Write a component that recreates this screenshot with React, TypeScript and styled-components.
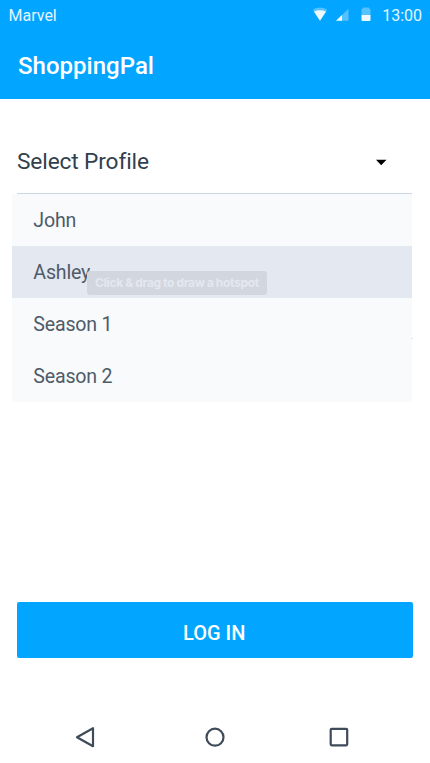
import React from "react";
import styled, { createGlobalStyle } from "styled-components";

const GlobalStyle = createGlobalStyle`
  * { box-sizing: border-box; }
  body { margin: 0; background: #fff; font-family: Roboto, sans-serif; color: #323f4d; }
`;

const Screen = styled.main`
  width: 430px;
  height: 763px;
  display: flex;
  flex-direction: column;
  background: #fff;
  overflow: hidden;
`;

const Header = styled.header`
  height: 98.5px;
  background: #02a5ff;
  color: #fff;
`;

const StatusBar = styled.div`
  height: 30px;
  padding: 0 8px 0 8.5px;
  display: flex;
  align-items: center;
  justify-content: space-between;
  font-size: 16px;
  line-height: 31px;
  color: #e4f5ff;
`;

const StatusIcons = styled.div`
  display: flex;
  align-items: center;
`;

const Glyphs = styled.svg`
  display: block;
  margin-right: 10px;
`;

const AppTitle = styled.h1`
  margin: 21px 0 0 18px;
  font-size: 24px;
  font-weight: 500;
  line-height: 30px;
  letter-spacing: 0.02px;
`;

const Select = styled.div`
  height: 95.5px;
  margin: 0 18px 0 17px;
  padding: 32px 25px 0 0;
  display: flex;
  align-items: center;
  justify-content: space-between;
  border-bottom: 1.5px solid #cbd5e3;
  font-size: 22.7px;
  letter-spacing: -0.13px;
`;

const Caret = styled.svg`
  display: block;
`;

const Menu = styled.ul`
  position: relative;
  width: 400px;
  height: 208px;
  margin: 0 0 0 12px;
  padding: 0;
  list-style: none;
`;

const Option = styled.li<{ $selected?: boolean }>`
  height: 52px;
  padding-left: 21.3px;
  font-size: 19.6px;
  line-height: 53px;
  letter-spacing: -0.2px;
  color: #4f5b69;
  background: ${(p) => (p.$selected ? "#e3e8f1" : "#f8fafc")};
`;

const Tooltip = styled.div`
  position: absolute;
  left: 75px;
  top: 77px;
  width: 180px;
  height: 24px;
  border-radius: 3px;
  background: #d2d6df;
  color: #e4e8ef;
  font: 700 12px/24px Inter, sans-serif;
  letter-spacing: -0.3px;
  word-spacing: -0.3px;
  text-align: center;
  white-space: nowrap;
`;

const LineEnd = styled.span`
  position: absolute;
  left: 399px;
  top: 144px;
  width: 2px;
  height: 1px;
  background: #dce4ed;
`;

const LoginButton = styled.button`
  width: 395.5px;
  height: 56px;
  margin: 200px 0 0 17px;
  padding: 5px 1px 0 0;
  border: 0;
  border-radius: 2px;
  background: #02a5ff;
  color: #fff;
  font: 500 20px/24px Roboto, sans-serif;
`;

const NavBar = styled.nav`
  margin-top: 67px;
  padding: 0 81px 0 75px;
  display: grid;
  grid-template-columns: 130px 124px 20px;
`;

const NavIcon = styled.svg`
  display: block;
  fill: none;
  stroke: #3f4b58;
  stroke-width: 2.2;
  stroke-linejoin: round;
`;

const options = ["John", "Ashley", "Season 1", "Season 2"];

export default function App() {
  return (
    <Screen>
      <GlobalStyle />
      <Header>
        <StatusBar>
          <span>Marvel</span>
          <StatusIcons>
            <Glyphs width="60" height="16" viewBox="312 7 60 16">
              <path d="M312.8 9.6Q320 5.2 327.2 9.6L320 20.8Z" fill="#55c1ff" />
              <path d="M313.9 11.6Q320 8.8 326.1 11.6L320 20.8Z" fill="#edf8ff" />
              <path d="M336 20.7L348.5 8.7V20.7Z" fill="#55c1ff" />
              <path d="M336 20.7L342 14.9V20.7Z" fill="#edf8ff" />
              <path d="M361.5 9.5Q361.5 8.5 363 8.5V7.5H369V8.5Q370.5 8.5 370.5 9.5V15H361.5Z" fill="#55c1ff" />
              <path d="M361.5 15H370.5V20Q370.5 21 369.5 21H362.5Q361.5 21 361.5 20Z" fill="#edf8ff" />
            </Glyphs>
            <span>13:00</span>
          </StatusIcons>
        </StatusBar>
        <AppTitle>ShoppingPal</AppTitle>
      </Header>
      <Select>
        <span>Select Profile</span>
        <Caret width="12" height="8" viewBox="0 0 12 8">
          <path d="M1 1.7H11.5L6.2 7.2Z" fill="#000" />
        </Caret>
      </Select>
      <Menu>
        {options.map((name) => (
          <Option key={name} $selected={name === "Ashley"}>{name}</Option>
        ))}
        <LineEnd />
        <Tooltip>Click &amp; drag to draw a hotspot</Tooltip>
      </Menu>
      <LoginButton>LOG IN</LoginButton>
      <NavBar>
        <NavIcon width="20" height="24" viewBox="75 725 20 24">
          <path d="M77 737.2L93 728.2V746.2Z" />
        </NavIcon>
        <NavIcon width="20" height="24" viewBox="205 725 20 24">
          <circle cx="215" cy="737.2" r="8.5" />
        </NavIcon>
        <NavIcon width="20" height="24" viewBox="329 725 20 24">
          <rect x="330.7" y="728.8" width="16.5" height="16.5" rx="1" />
        </NavIcon>
      </NavBar>
    </Screen>
  );
}
